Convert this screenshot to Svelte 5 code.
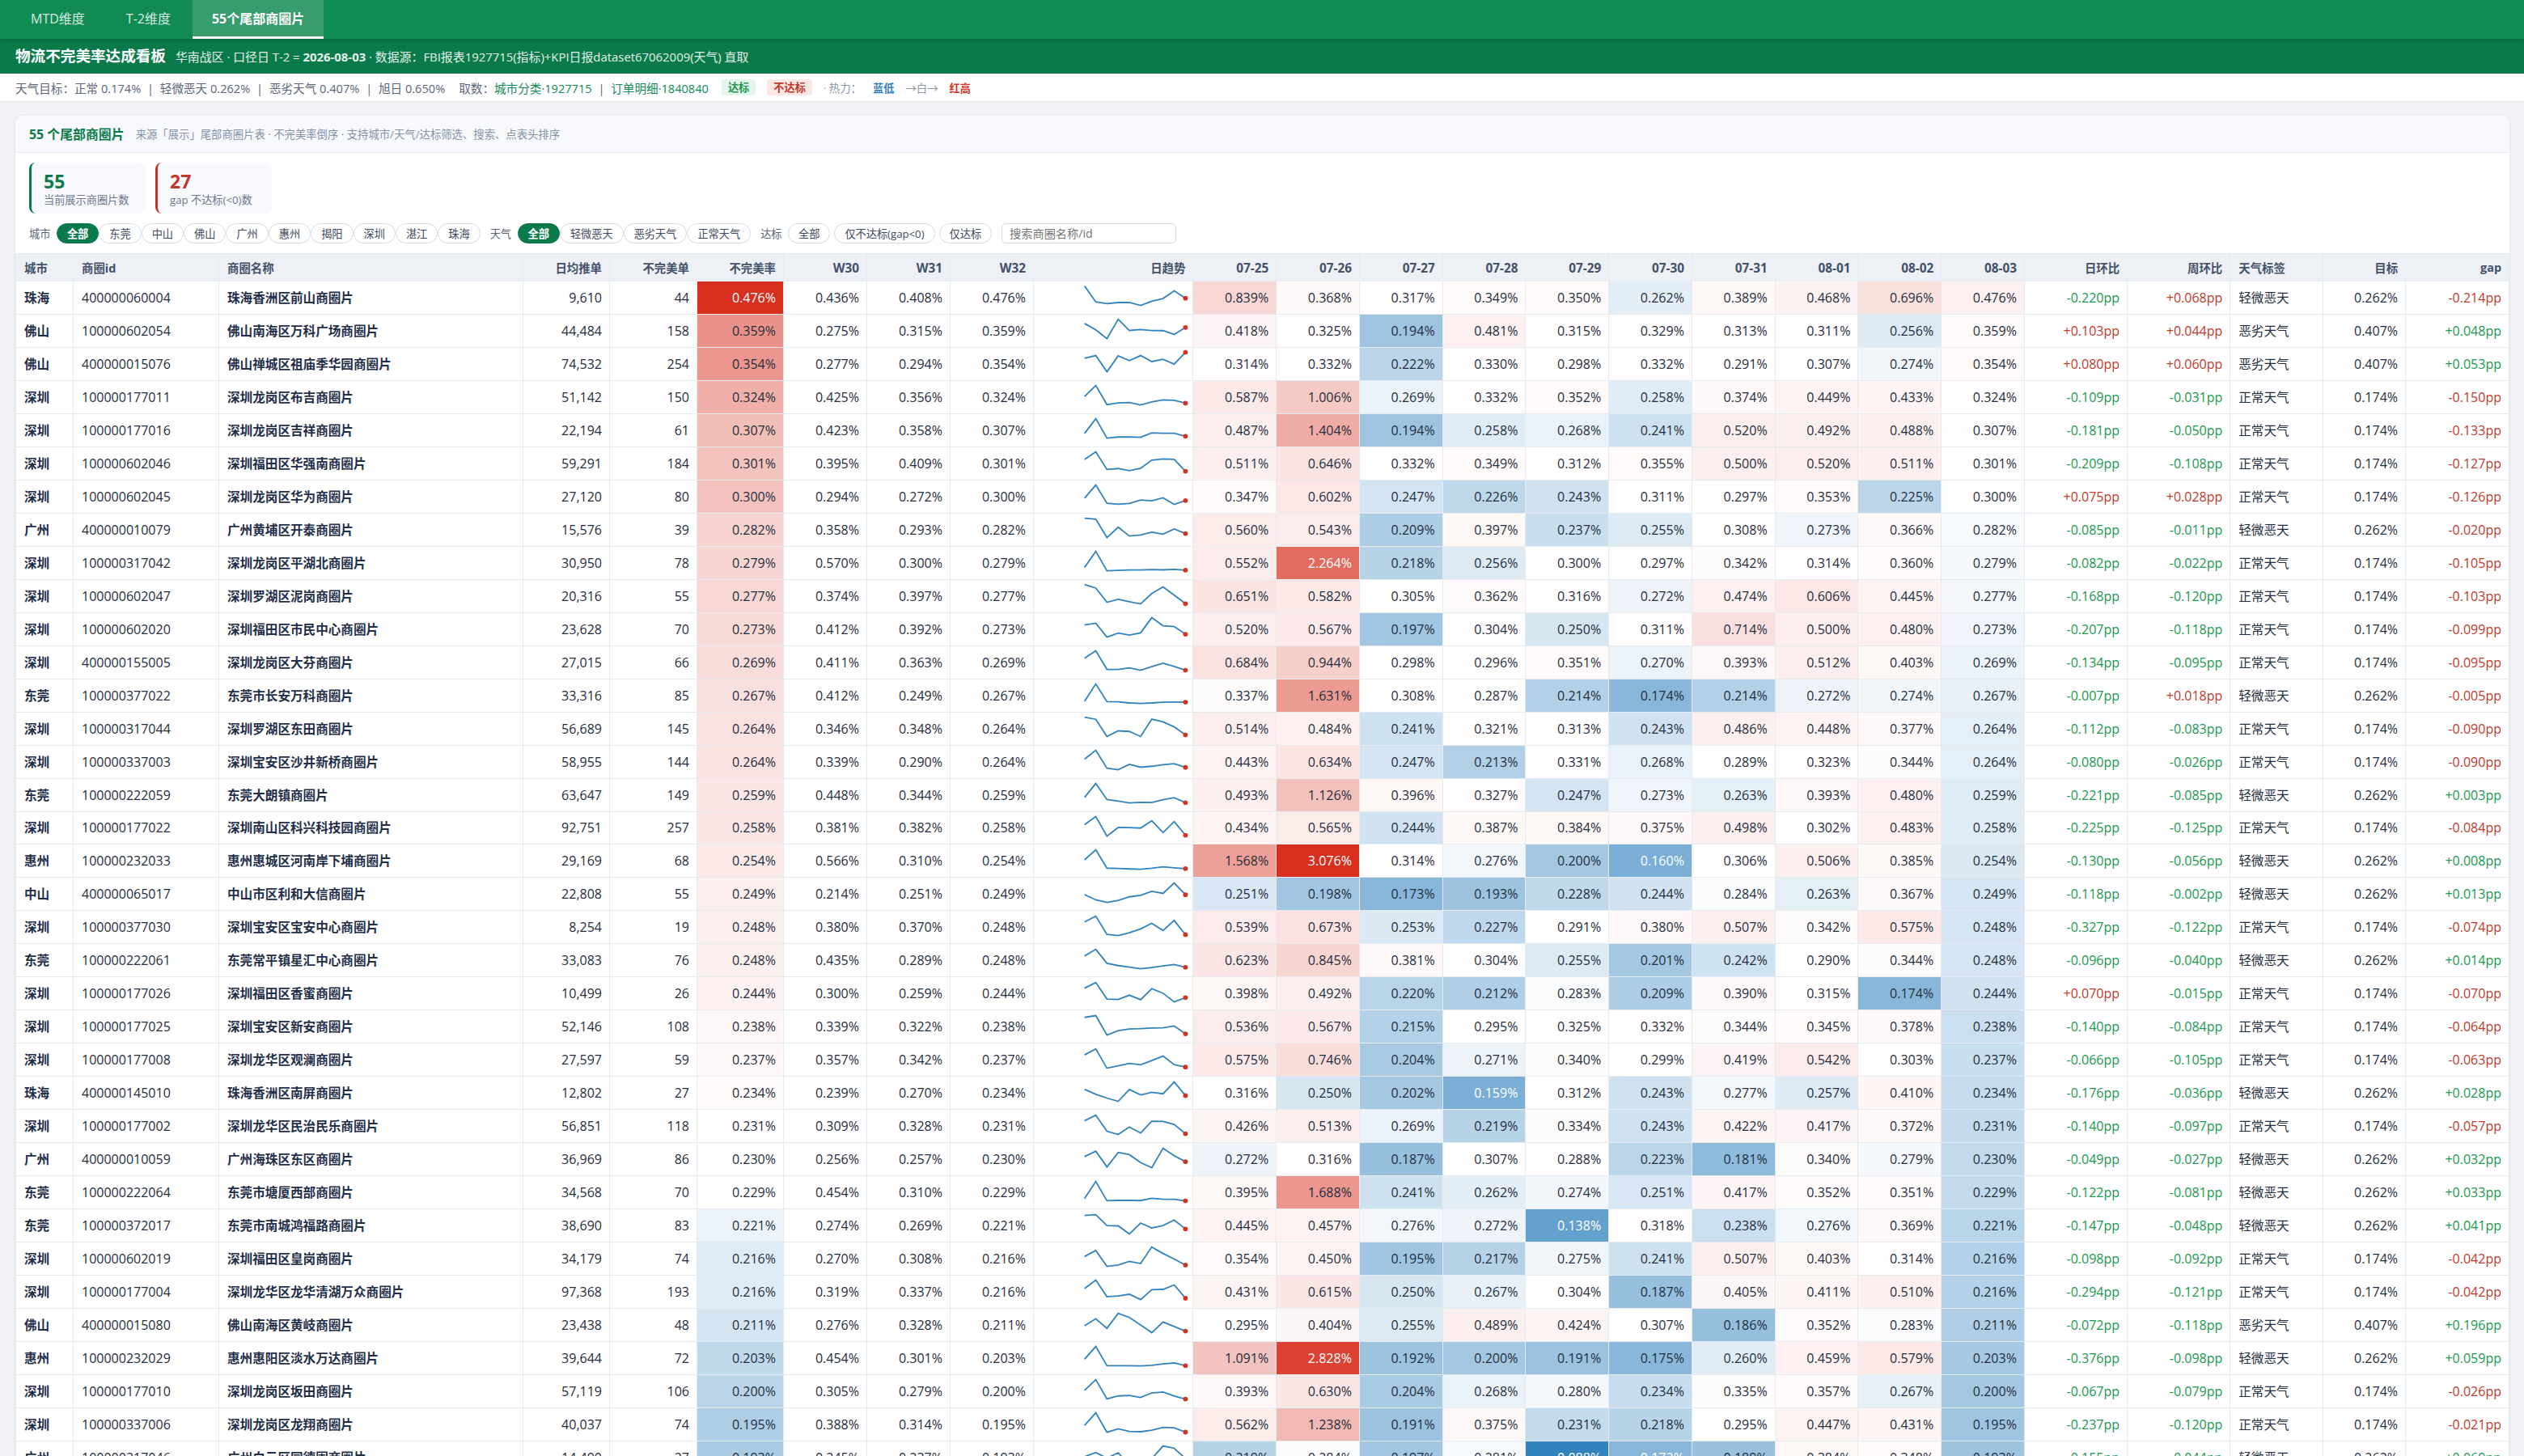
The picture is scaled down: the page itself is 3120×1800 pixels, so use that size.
<script>
	const tabs = ['MTD维度', 'T-2维度', '55个尾部商圈片'];
	const activeTab = 2;

	const cities = ['全部', '东莞', '中山', '佛山', '广州', '惠州', '揭阳', '深圳', '湛江', '珠海'];
	const weathers = ['全部', '轻微恶天', '恶劣天气', '正常天气'];
	const reach = ['全部', '仅不达标(gap<0)', '仅达标'];

	const dates = ['07-25', '07-26', '07-27', '07-28', '07-29', '07-30', '07-31', '08-01', '08-02', '08-03'];

	const N = '正常天气';
	const L = '轻微恶天';
	const B = '恶劣天气';
	const targets = { [N]: 0.174, [L]: 0.262, [B]: 0.407 };

	// city, id, name, orders, bad orders, W30, W31, daily rates, day change, week change, weather
	const source = [
		['珠海', '400000060004', '珠海香洲区前山商圈片', '9,610', 44, 0.436, 0.408, [0.839, 0.368, 0.317, 0.349, 0.35, 0.262, 0.389, 0.468, 0.696, 0.476], -0.22, 0.068, L],
		['佛山', '100000602054', '佛山南海区万科广场商圈片', '44,484', 158, 0.275, 0.315, [0.418, 0.325, 0.194, 0.481, 0.315, 0.329, 0.313, 0.311, 0.256, 0.359], 0.103, 0.044, B],
		['佛山', '400000015076', '佛山禅城区祖庙季华园商圈片', '74,532', 254, 0.277, 0.294, [0.314, 0.332, 0.222, 0.33, 0.298, 0.332, 0.291, 0.307, 0.274, 0.354], 0.08, 0.06, B],
		['深圳', '100000177011', '深圳龙岗区布吉商圈片', '51,142', 150, 0.425, 0.356, [0.587, 1.006, 0.269, 0.332, 0.352, 0.258, 0.374, 0.449, 0.433, 0.324], -0.109, -0.031, N],
		['深圳', '100000177016', '深圳龙岗区吉祥商圈片', '22,194', 61, 0.423, 0.358, [0.487, 1.404, 0.194, 0.258, 0.268, 0.241, 0.52, 0.492, 0.488, 0.307], -0.181, -0.05, N],
		['深圳', '100000602046', '深圳福田区华强南商圈片', '59,291', 184, 0.395, 0.409, [0.511, 0.646, 0.332, 0.349, 0.312, 0.355, 0.5, 0.52, 0.511, 0.301], -0.209, -0.108, N],
		['深圳', '100000602045', '深圳龙岗区华为商圈片', '27,120', 80, 0.294, 0.272, [0.347, 0.602, 0.247, 0.226, 0.243, 0.311, 0.297, 0.353, 0.225, 0.3], 0.075, 0.028, N],
		['广州', '400000010079', '广州黄埔区开泰商圈片', '15,576', 39, 0.358, 0.293, [0.56, 0.543, 0.209, 0.397, 0.237, 0.255, 0.308, 0.273, 0.366, 0.282], -0.085, -0.011, L],
		['深圳', '100000317042', '深圳龙岗区平湖北商圈片', '30,950', 78, 0.57, 0.3, [0.552, 2.264, 0.218, 0.256, 0.3, 0.297, 0.342, 0.314, 0.36, 0.279], -0.082, -0.022, N],
		['深圳', '100000602047', '深圳罗湖区泥岗商圈片', '20,316', 55, 0.374, 0.397, [0.651, 0.582, 0.305, 0.362, 0.316, 0.272, 0.474, 0.606, 0.445, 0.277], -0.168, -0.12, N],
		['深圳', '100000602020', '深圳福田区市民中心商圈片', '23,628', 70, 0.412, 0.392, [0.52, 0.567, 0.197, 0.304, 0.25, 0.311, 0.714, 0.5, 0.48, 0.273], -0.207, -0.118, N],
		['深圳', '400000155005', '深圳龙岗区大芬商圈片', '27,015', 66, 0.411, 0.363, [0.684, 0.944, 0.298, 0.296, 0.351, 0.27, 0.393, 0.512, 0.403, 0.269], -0.134, -0.095, N],
		['东莞', '100000377022', '东莞市长安万科商圈片', '33,316', 85, 0.412, 0.249, [0.337, 1.631, 0.308, 0.287, 0.214, 0.174, 0.214, 0.272, 0.274, 0.267], -0.007, 0.018, L],
		['深圳', '100000317044', '深圳罗湖区东田商圈片', '56,689', 145, 0.346, 0.348, [0.514, 0.484, 0.241, 0.321, 0.313, 0.243, 0.486, 0.448, 0.377, 0.264], -0.112, -0.083, N],
		['深圳', '100000337003', '深圳宝安区沙井新桥商圈片', '58,955', 144, 0.339, 0.29, [0.443, 0.634, 0.247, 0.213, 0.331, 0.268, 0.289, 0.323, 0.344, 0.264], -0.08, -0.026, N],
		['东莞', '100000222059', '东莞大朗镇商圈片', '63,647', 149, 0.448, 0.344, [0.493, 1.126, 0.396, 0.327, 0.247, 0.273, 0.263, 0.393, 0.48, 0.259], -0.221, -0.085, L],
		['深圳', '100000177022', '深圳南山区科兴科技园商圈片', '92,751', 257, 0.381, 0.382, [0.434, 0.565, 0.244, 0.387, 0.384, 0.375, 0.498, 0.302, 0.483, 0.258], -0.225, -0.125, N],
		['惠州', '100000232033', '惠州惠城区河南岸下埔商圈片', '29,169', 68, 0.566, 0.31, [1.568, 3.076, 0.314, 0.276, 0.2, 0.16, 0.306, 0.506, 0.385, 0.254], -0.13, -0.056, L],
		['中山', '400000065017', '中山市区利和大信商圈片', '22,808', 55, 0.214, 0.251, [0.251, 0.198, 0.173, 0.193, 0.228, 0.244, 0.284, 0.263, 0.367, 0.249], -0.118, -0.002, L],
		['深圳', '100000377030', '深圳宝安区宝安中心商圈片', '8,254', 19, 0.38, 0.37, [0.539, 0.673, 0.253, 0.227, 0.291, 0.38, 0.507, 0.342, 0.575, 0.248], -0.327, -0.122, N],
		['东莞', '100000222061', '东莞常平镇星汇中心商圈片', '33,083', 76, 0.435, 0.289, [0.623, 0.845, 0.381, 0.304, 0.255, 0.201, 0.242, 0.29, 0.344, 0.248], -0.096, -0.04, L],
		['深圳', '100000177026', '深圳福田区香蜜商圈片', '10,499', 26, 0.3, 0.259, [0.398, 0.492, 0.22, 0.212, 0.283, 0.209, 0.39, 0.315, 0.174, 0.244], 0.07, -0.015, N],
		['深圳', '100000177025', '深圳宝安区新安商圈片', '52,146', 108, 0.339, 0.322, [0.536, 0.567, 0.215, 0.295, 0.325, 0.332, 0.344, 0.345, 0.378, 0.238], -0.14, -0.084, N],
		['深圳', '100000177008', '深圳龙华区观澜商圈片', '27,597', 59, 0.357, 0.342, [0.575, 0.746, 0.204, 0.271, 0.34, 0.299, 0.419, 0.542, 0.303, 0.237], -0.066, -0.105, N],
		['珠海', '400000145010', '珠海香洲区南屏商圈片', '12,802', 27, 0.239, 0.27, [0.316, 0.25, 0.202, 0.159, 0.312, 0.243, 0.277, 0.257, 0.41, 0.234], -0.176, -0.036, L],
		['深圳', '100000177002', '深圳龙华区民治民乐商圈片', '56,851', 118, 0.309, 0.328, [0.426, 0.513, 0.269, 0.219, 0.334, 0.243, 0.422, 0.417, 0.372, 0.231], -0.14, -0.097, N],
		['广州', '400000010059', '广州海珠区东区商圈片', '36,969', 86, 0.256, 0.257, [0.272, 0.316, 0.187, 0.307, 0.288, 0.223, 0.181, 0.34, 0.279, 0.23], -0.049, -0.027, L],
		['东莞', '100000222064', '东莞市塘厦西部商圈片', '34,568', 70, 0.454, 0.31, [0.395, 1.688, 0.241, 0.262, 0.274, 0.251, 0.417, 0.352, 0.351, 0.229], -0.122, -0.081, L],
		['东莞', '100000372017', '东莞市南城鸿福路商圈片', '38,690', 83, 0.274, 0.269, [0.445, 0.457, 0.276, 0.272, 0.138, 0.318, 0.238, 0.276, 0.369, 0.221], -0.147, -0.048, L],
		['深圳', '100000602019', '深圳福田区皇岗商圈片', '34,179', 74, 0.27, 0.308, [0.354, 0.45, 0.195, 0.217, 0.275, 0.241, 0.507, 0.403, 0.314, 0.216], -0.098, -0.092, N],
		['深圳', '100000177004', '深圳龙华区龙华清湖万众商圈片', '97,368', 193, 0.319, 0.337, [0.431, 0.615, 0.25, 0.267, 0.304, 0.187, 0.405, 0.411, 0.51, 0.216], -0.294, -0.121, N],
		['佛山', '400000015080', '佛山南海区黄岐商圈片', '23,438', 48, 0.276, 0.328, [0.295, 0.404, 0.255, 0.489, 0.424, 0.307, 0.186, 0.352, 0.283, 0.211], -0.072, -0.118, B],
		['惠州', '100000232029', '惠州惠阳区淡水万达商圈片', '39,644', 72, 0.454, 0.301, [1.091, 2.828, 0.192, 0.2, 0.191, 0.175, 0.26, 0.459, 0.579, 0.203], -0.376, -0.098, L],
		['深圳', '100000177010', '深圳龙岗区坂田商圈片', '57,119', 106, 0.305, 0.279, [0.393, 0.63, 0.204, 0.268, 0.28, 0.234, 0.335, 0.357, 0.267, 0.2], -0.067, -0.079, N],
		['深圳', '100000337006', '深圳龙岗区龙翔商圈片', '40,037', 74, 0.388, 0.314, [0.562, 1.238, 0.191, 0.375, 0.231, 0.218, 0.295, 0.447, 0.431, 0.195], -0.237, -0.12, N],
		['广州', '100000317046', '广州白云区同德围商圈片', '14,490', 27, 0.245, 0.237, [0.219, 0.284, 0.197, 0.281, 0.088, 0.172, 0.189, 0.384, 0.348, 0.193], -0.155, -0.044, L]
	];

	const rows = source.map(([city, id, name, orders, bad, w30, w31, days, dod, wow, weather]) => {
		const rate = days[days.length - 1];
		const target = targets[weather];
		return { city, id, name, orders, bad, w30, w31, days, dod, wow, weather, rate, target, gap: target - rate };
	});

	const pct = (v) => v.toFixed(3) + '%';
	const pp = (v) => (v > 0 ? '+' : '') + v.toFixed(3) + 'pp';

	const RED = [215, 48, 31];
	const BLUE = [49, 130, 189];

	/** White at mid, blue towards low, red towards high. */
	function heat(v, low, mid, high) {
		const hot = v >= mid;
		const t = Math.min(1, hot ? (v - mid) / (high - mid) : (mid - v) / (mid - low));
		const rgb = (hot ? RED : BLUE).map((c) => Math.round(255 + (c - 255) * t));
		return `background:rgb(${rgb.join(',')});color:${t > 0.58 ? '#fff' : '#1f2d3d'}`;
	}

	const rateHeat = (v) => heat(v, 0.142, 0.229, 0.476);
	const dayHeat = (v) => heat(v, 0.088, 0.289, 3.076);

	function spark(days) {
		const min = Math.min(...days);
		const max = Math.max(...days);
		return days.map((v, i) => [3 + (i * 104) / (days.length - 1), 3 + ((max - v) / (max - min)) * 20]);
	}

	const line = (points) => points.map((p) => p.map((n) => n.toFixed(1)).join(',')).join(' ');
</script>

<nav class="tabs">
	{#each tabs as tab, i}
		<button class="tab" class:active={i === activeTab}>{tab}</button>
	{/each}
</nav>

<header class="top">
	<h1>物流不完美率达成看板</h1>
	<span class="meta">华南战区 · 口径日 T-2 = <b>2026-08-03</b> · 数据源：FBI报表1927715(指标)+KPI日报dataset67062009(天气) 直取</span>
</header>

<div class="legend">
	<span>天气目标：正常 0.174% <i>|</i> 轻微恶天 0.262% <i>|</i> 恶劣天气 0.407% <i>|</i> 旭日 0.650%</span>
	<span class="fetch">取数：<a href="#city">城市分类·1927715</a> <i>|</i> <a href="#orders">订单明细·1840840</a></span>
	<span class="badge ok">达标</span>
	<span class="badge bad">不达标</span>
	<span class="scale">· 热力：</span>
	<b class="low">蓝低</b>
	<span class="scale">→白→</span>
	<b class="high">红高</b>
</div>

<section class="card">
	<div class="card-head">
		<h2>55 个尾部商圈片</h2>
		<span class="desc">来源「展示」尾部商圈片表 · 不完美率倒序 · 支持城市/天气/达标筛选、搜索、点表头排序</span>
	</div>

	<div class="stats">
		<div class="stat">
			<div class="num">55</div>
			<div class="label">当前展示商圈片数</div>
		</div>
		<div class="stat warn">
			<div class="num">27</div>
			<div class="label">gap 不达标(&lt;0)数</div>
		</div>
	</div>

	<div class="filters">
		<span class="name">城市</span>
		<div class="group">
			{#each cities as city, i}
				<button class="pill" class:on={i === 0}>{city}</button>
			{/each}
		</div>
		<span class="name">天气</span>
		<div class="group">
			{#each weathers as weather, i}
				<button class="pill" class:on={i === 0}>{weather}</button>
			{/each}
		</div>
		<span class="name">达标</span>
		<div class="group loose">
			{#each reach as item}
				<button class="pill">{item}</button>
			{/each}
		</div>
		<input placeholder="搜索商圈名称/id" />
	</div>

	<table>
		<colgroup>
			<col class="c-city" /><col class="c-id" /><col class="c-name" /><col class="c-num" /><col class="c-bad" />
			<col class="c-num" /><col class="c-week" span="3" /><col class="c-spark" /><col class="c-day" span="10" />
			<col class="c-diff" span="2" /><col class="c-weather" /><col class="c-target" /><col />
		</colgroup>
		<thead>
			<tr>
				<th class="left">城市</th>
				<th class="left">商圈id</th>
				<th class="left">商圈名称</th>
				<th>日均推单</th>
				<th>不完美单</th>
				<th>不完美率</th>
				<th class="latin">W30</th>
				<th class="latin">W31</th>
				<th class="latin">W32</th>
				<th>日趋势</th>
				{#each dates as date}
					<th class="latin">{date}</th>
				{/each}
				<th>日环比</th>
				<th>周环比</th>
				<th class="left">天气标签</th>
				<th>目标</th>
				<th>gap</th>
			</tr>
		</thead>
		<tbody>
			{#each rows as row (row.id)}
				{@const points = spark(row.days)}
				<tr>
					<td class="left zh strong">{row.city}</td>
					<td class="left">{row.id}</td>
					<td class="left zh strong">{row.name}</td>
					<td>{row.orders}</td>
					<td>{row.bad}</td>
					<td style={rateHeat(row.rate)}>{pct(row.rate)}</td>
					<td>{pct(row.w30)}</td>
					<td>{pct(row.w31)}</td>
					<td>{pct(row.rate)}</td>
					<td class="spark">
						<svg viewBox="0 0 110 26" width="132" height="31.2">
							<polyline points={line(points)} />
							<circle cx={points[9][0]} cy={points[9][1]} r="2.4" />
						</svg>
					</td>
					{#each row.days as v}
						<td style={dayHeat(v)}>{pct(v)}</td>
					{/each}
					<td class={row.dod > 0 ? 'red' : 'green'}>{pp(row.dod)}</td>
					<td class={row.wow > 0 ? 'red' : 'green'}>{pp(row.wow)}</td>
					<td class="left zh">{row.weather}</td>
					<td>{pct(row.target)}</td>
					<td class={row.gap < 0 ? 'red' : 'green'}>{pp(row.gap)}</td>
				</tr>
			{/each}
		</tbody>
	</table>
</section>

<style>
	:global(html) {
		height: 100%;
		overflow: hidden;
	}

	:global(body) {
		margin: 0;
		height: 100%;
		overflow: hidden;
		background: #f0f2f6;
		color: #1f2d3d;
		font-family: 'Open Sans', 'Noto Sans CJK SC', sans-serif;
		font-size: 15.6px;
	}

	button,
	input {
		font-family: inherit;
	}

	.tabs {
		position: relative;
		z-index: 1;
		display: flex;
		height: 48px;
		padding-left: 14px;
		background: #118b53;
		box-shadow: 0 2px 7px rgba(0, 0, 0, 0.16);
	}

	.tab {
		padding: 0 24px;
		border: 0;
		border-bottom: 3px solid transparent;
		background: none;
		color: #d8eee2;
		font-size: 16px;
		line-height: 42px;
	}

	.tab + .tab {
		margin-left: 3px;
	}

	.tab.active {
		border-bottom-color: #fff;
		background: rgba(255, 255, 255, 0.16);
		color: #fff;
		font-weight: 700;
	}

	.top {
		display: flex;
		align-items: center;
		gap: 12px;
		height: 43px;
		padding: 0 19px;
		background: #0b7a4b;
		color: #fff;
	}

	h1 {
		margin: 0;
		font-size: 18.6px;
		font-weight: 700;
		line-height: 1;
	}

	.meta {
		color: #e2f1e9;
		font-size: 14.9px;
	}

	.legend {
		display: flex;
		align-items: center;
		box-sizing: border-box;
		height: 35px;
		padding: 0 19px;
		border-bottom: 1px solid #e1e5eb;
		background: #fff;
		color: #5a6678;
		font-size: 14.6px;
	}

	.legend i {
		margin: 0 4px;
		font-style: normal;
	}

	.fetch {
		margin-left: 17px;
	}

	.legend a {
		color: #128a53;
		text-decoration: none;
	}

	.badge {
		margin-left: 16px;
		padding: 0 8px;
		border-radius: 4px;
		font-size: 13.2px;
		font-weight: 700;
		line-height: 20px;
	}

	.badge + .badge {
		margin-left: 14px;
	}

	.ok {
		background: #e3f6ea;
		color: #1a9850;
	}

	.bad {
		background: #fde7e4;
		color: #c0392b;
	}

	.scale {
		margin-left: 14px;
		color: #8a96a8;
		font-size: 13.4px;
	}

	.low,
	.high {
		margin-left: 14px;
		font-size: 13.2px;
	}

	.low {
		color: #2f80bd;
	}

	.high {
		color: #d7301f;
	}

	.card {
		width: 3083px;
		margin: 17px 0 0 19px;
		overflow: hidden;
		border-radius: 10px;
		background: #fff;
		box-shadow: 0 1px 5px rgba(20, 40, 80, 0.08);
	}

	.card-head {
		display: flex;
		align-items: center;
		gap: 14px;
		box-sizing: border-box;
		height: 46px;
		padding: 0 17px;
		border-bottom: 1px solid #e6eaf1;
		background: #f7f9fd;
	}

	h2 {
		margin: 0;
		color: #0b7a4b;
		font-size: 15.9px;
		font-weight: 700;
	}

	.desc {
		color: #8592a6;
		font-size: 13.35px;
	}

	.stats {
		display: flex;
		gap: 12px;
		padding: 12px 17px 0;
	}

	.stat {
		box-sizing: border-box;
		width: 144px;
		height: 63px;
		padding: 11px 0 0 15px;
		border-left: 3.6px solid #0b7a4b;
		border-radius: 8px;
		background: #f7f9fd;
	}

	.num {
		color: #0b7a4b;
		font-size: 23px;
		font-weight: 700;
		line-height: 24px;
	}

	.label {
		margin-top: 2px;
		color: #6b778c;
		font-size: 13.2px;
		line-height: 18px;
	}

	.warn {
		border-left-color: #c0392b;
	}

	.warn .num {
		color: #c0392b;
	}

	.filters {
		display: flex;
		align-items: center;
		height: 25px;
		padding: 12px 17px;
	}

	.filters .name {
		margin-right: 7.5px;
		color: #5a6678;
		font-size: 13.2px;
	}

	.group {
		display: flex;
		margin-right: 12px;
	}

	.group.loose {
		gap: 5px;
	}

	.pill {
		box-sizing: border-box;
		height: 25px;
		padding: 0 12px;
		border: 1px solid #d3dae6;
		border-radius: 13px;
		background: #fff;
		color: #3d4a60;
		font-size: 13.2px;
		line-height: 22px;
	}

	.pill.on {
		border-color: #0b7a4b;
		background: #0b7a4b;
		color: #fff;
		font-weight: 700;
	}

	input {
		box-sizing: border-box;
		width: 216px;
		height: 25px;
		padding: 0 9px;
		border: 1px solid #d3dae6;
		border-radius: 5px;
		font-size: 14.2px;
	}

	table {
		width: 100%;
		border-top: 1px solid #e6eaf1;
		border-left: 1px solid #e6eaf1;
		border-spacing: 0;
		table-layout: fixed;
	}

	.c-city { width: 71px; }
	.c-id { width: 180px; }
	.c-name { width: 376px; }
	.c-num { width: 107px; }
	.c-bad { width: 108px; }
	.c-week { width: 103px; }
	.c-spark { width: 197.4px; }
	.c-day { width: 102.75px; }
	.c-diff { width: 127.2px; }
	.c-weather { width: 114.6px; }
	.c-target { width: 102.2px; }

	th,
	td {
		box-sizing: border-box;
		padding: 0 9px;
		border-right: 1px solid #e6eaf1;
		border-bottom: 1px solid #e6eaf1;
		text-align: right;
		white-space: nowrap;
	}

	th {
		height: 34px;
		background: #edf0f5;
		color: #43516a;
		font-size: 14.4px;
		font-weight: 700;
	}

	th.latin {
		font-size: 15.3px;
	}

	td {
		height: 40.97px;
		font-size: 16px;
		line-height: 22px;
	}

	.left {
		padding-left: 10px;
		text-align: left;
	}

	.zh {
		font-size: 15.6px;
	}

	.strong {
		color: #1f2f4a;
		font-weight: 700;
	}

	.spark {
		padding: 0 5px 4px 0;
		line-height: 0;
	}

	.spark svg {
		vertical-align: middle;
	}

	polyline {
		fill: none;
		stroke: #3182bd;
		stroke-width: 1.5;
	}

	circle {
		fill: #d7301f;
	}

	.green {
		color: #1a9850;
	}

	.red {
		color: #c0392b;
	}
</style>
